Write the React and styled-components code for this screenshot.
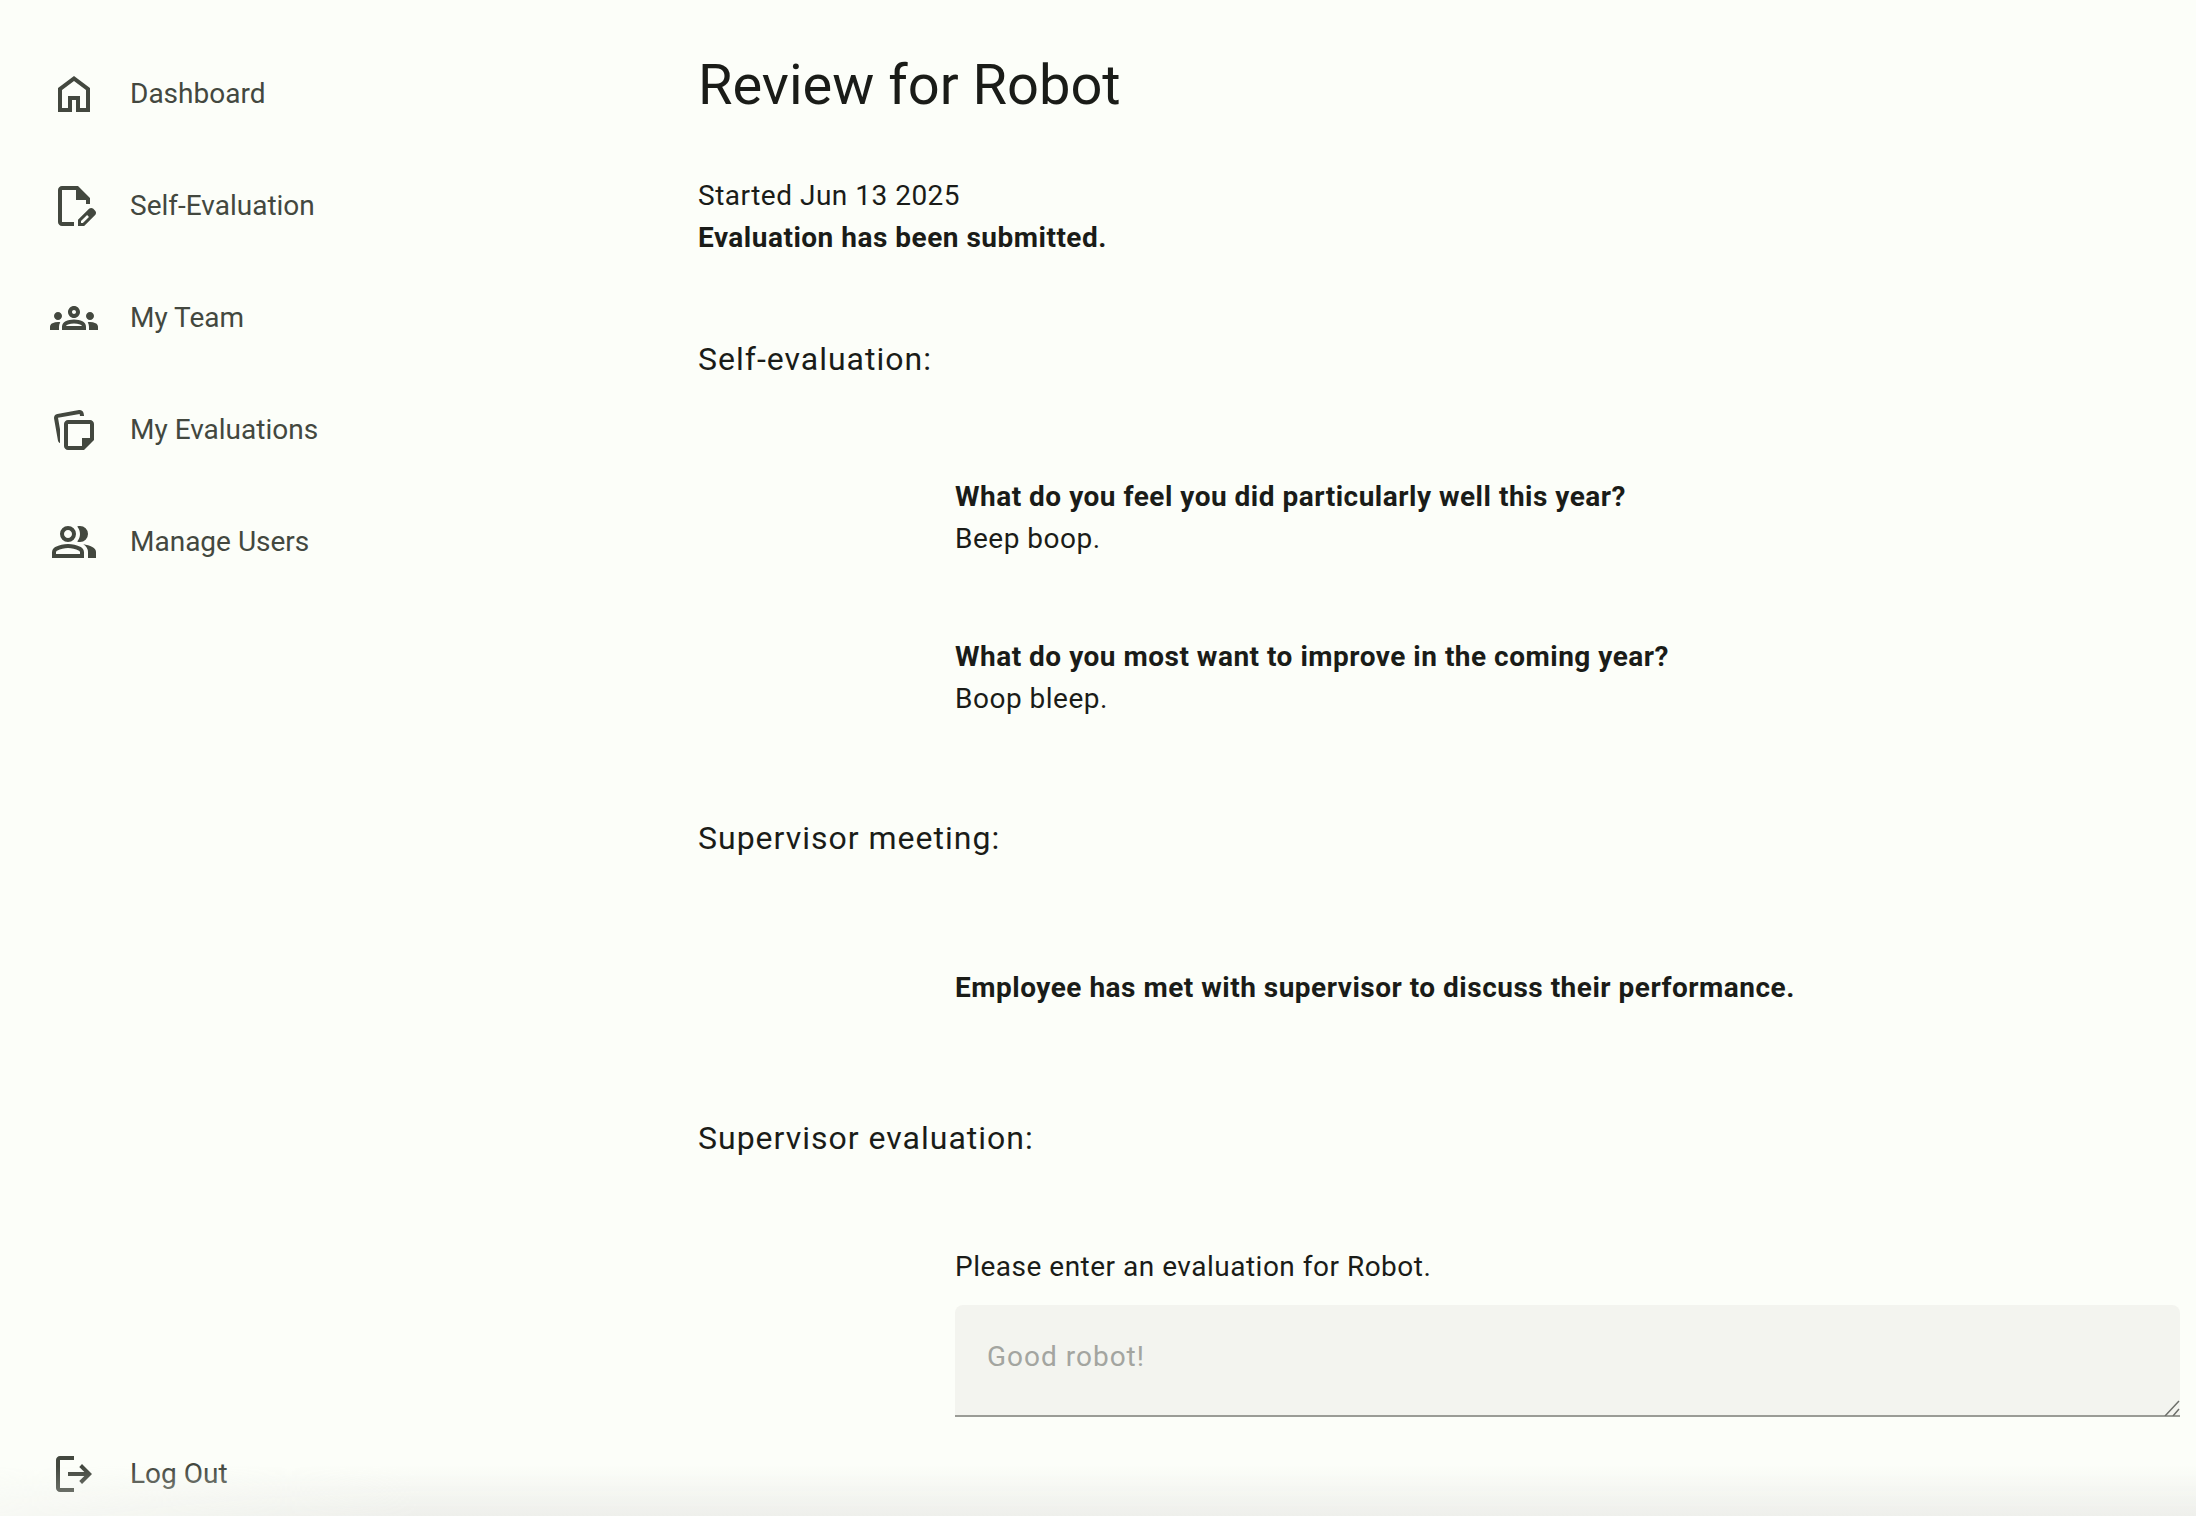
import React from 'react';
import styled, { createGlobalStyle } from 'styled-components';

const GlobalStyle = createGlobalStyle`
	html, body {
		margin: 0;
		height: 100%;
		overflow: hidden;
		background: #fcfef9;
	}
	body {
		font-family: Roboto, "Liberation Sans", sans-serif;
		color: #1a1c18;
	}
`;

const Page = styled.div`
	display: flex;
	height: 100vh;
	overflow: hidden;
`;

const Nav = styled.nav`
	display: flex;
	flex-direction: column;
	justify-content: space-between;
	flex: none;
	box-sizing: border-box;
	width: 698px;
	padding: 38px 0 0 50px;
`;

const NavList = styled.div`
	display: flex;
	flex-direction: column;
`;

const NavItem = styled.a`
	display: flex;
	align-items: center;
	gap: 32px;
	height: ${props => props.$height || 112}px;
	color: #43483f;
	font-size: 28px;
	line-height: 40px;
`;

const NavLabel = styled.span`
	margin-top: -1px;
`;

const Icon = styled.svg`
	flex: none;
	width: 48px;
	height: 48px;
	fill: #43483f;
`;

const Main = styled.main`
	flex: 1;
	min-width: 0;
	padding: 49px 16px 0 0;
`;

const Title = styled.h1`
	margin: 0 0 54px;
	font-size: 56px;
	font-weight: 400;
	line-height: 72px;
`;

const Line = styled.div`
	font-size: 28px;
	line-height: 42px;
	letter-spacing: 0.5px;
	font-weight: ${props => props.$bold ? 700 : 400};
`;

const SectionTitle = styled.h2`
	margin: ${props => props.$top}px 0 0;
	font-size: 32px;
	font-weight: 400;
	line-height: 48px;
	letter-spacing: 1px;
`;

const Indented = styled.div`
	margin: ${props => props.$top}px 0 0 257px;
`;

const Field = styled.div`
	position: relative;
	margin-top: 17px;
`;

const TextArea = styled.textarea`
	display: block;
	box-sizing: border-box;
	width: 100%;
	height: 112px;
	padding: 34px 32px 0;
	border: 0;
	border-bottom: 2px solid #9a9c96;
	border-radius: 8px 8px 0 0;
	outline: 0;
	background: #f3f4ef;
	color: #1a1c18;
	font-family: inherit;
	font-size: 28px;
	line-height: 36px;
	letter-spacing: 1px;
	resize: none;

	&::placeholder {
		color: #a3a5a0;
		opacity: 1;
	}
`;

const Grip = styled.svg`
	position: absolute;
	right: 0;
	bottom: 1px;
	width: 16px;
	height: 16px;
	stroke: #6d6f6a;
	stroke-width: 1.5;
	fill: none;
`;

const BottomFade = styled.div`
	position: fixed;
	left: 0;
	right: 0;
	bottom: 0;
	height: 50px;
	background: linear-gradient(to bottom, rgba(236, 237, 232, 0), #eeefeb);
	mask-image: linear-gradient(to right, rgba(0, 0, 0, 0.35), #000 420px);
	pointer-events: none;
`;

const icons = {
	home: 'M240-200h120v-240h240v240h120v-360L480-740 240-560v360Zm-80 80v-480l320-240 320 240v480H520v-240h-80v240H160Zm320-350Z',
	edit: 'M560-80v-123l221-220q9-9 20-13t22-4q12 0 23 4.5t20 12.5l37 37q8 9 12.5 20t4.5 22q0 11-4 22.5T903-300L683-80H560Zm60-60h38l121-122-18-19-19-18-122 121v38ZM240-80q-33 0-56.5-23.5T160-160v-640q0-33 23.5-56.5T240-880h320l240 240v120h-80v-80H520v-200H240v640h240v80H240Z',
	notes: 'M280-160v-441q0-33 24-56t57-23h439q33 0 56.5 23.5T880-600v320L680-80H360q-33 0-56.5-23.5T280-160ZM81-710q-6-33 13-59.5t52-32.5l434-77q33-6 59.5 13t32.5 52l10 54h-82l-7-40-433 77 40 226v279q-16-9-27.5-24T158-276L81-710Zm279 110v440h280v-160h160v-280H360Zm220 220Z',
	users: 'M40-160v-112q0-34 17.5-62.5T104-378q62-31 126-46.5T360-440q66 0 130 15.5T616-378q29 15 46.5 43.5T680-272v112H40Zm720 0v-120q0-44-24.5-84.5T666-434q51 6 96 20.5t84 35.5q36 20 55 44.5t19 53.5v120H760ZM360-480q-66 0-113-47t-47-113q0-66 47-113t113-47q66 0 113 47t47 113q0 66-47 113t-113 47Zm400-160q0 66-47 113t-113 47q-11 0-28-2.5t-28-5.5q27-32 41.5-71t14.5-81q0-42-14.5-81T544-792q14-5 28-6.5t28-1.5q66 0 113 47t47 113ZM120-240h480v-32q0-11-5.5-20T580-306q-54-27-109-40.5T360-360q-56 0-111 13.5T140-306q-9 5-14.5 14t-5.5 20v32Zm240-320q33 0 56.5-23.5T440-640q0-33-23.5-56.5T360-720q-33 0-56.5 23.5T280-640q0 33 23.5 56.5T360-560Zm0 320Zm0-400Z',
	logout: 'M200-120q-33 0-56.5-23.5T120-200v-560q0-33 23.5-56.5T200-840h280v80H200v560h280v80H200Zm440-160-55-58 102-102H360v-80h327L585-622l55-58 200 200-200 200Z',
};

const teamPath = 'M4,13c1.1,0,2-0.9,2-2c0-1.1-0.9-2-2-2s-2,0.9-2,2C2,12.1,2.9,13,4,13z M5.13,14.1C4.76,14.04,4.39,14,4,14c-0.99,0-1.93,0.21-2.78,0.58C0.48,14.9,0,15.62,0,16.43V18l4.5,0v-1.61C4.5,15.56,4.73,14.78,5.13,14.1z M20,13c1.1,0,2-0.9,2-2c0-1.1-0.9-2-2-2s-2,0.9-2,2C18,12.1,18.9,13,20,13z M24,16.43c0-0.81-0.48-1.53-1.22-1.85C21.93,14.21,20.99,14,20,14c-0.39,0-0.76,0.04-1.13,0.1c0.4,0.68,0.63,1.46,0.63,2.29V18l4.5,0V16.43z M16.24,13.65c-1.17-0.52-2.61-0.9-4.24-0.9c-1.63,0-3.07,0.39-4.24,0.9C6.68,14.13,6,15.21,6,16.39V18h12v-1.61C18,15.21,17.32,14.13,16.24,13.65z M8.07,16c0.09-0.23,0.13-0.39,0.91-0.69c0.97-0.38,1.99-0.56,3.02-0.56s2.05,0.18,3.02,0.56c0.77,0.3,0.81,0.46,0.91,0.69H8.07z M12,8c0.55,0,1,0.45,1,1s-0.45,1-1,1s-1-0.45-1-1S11.45,8,12,8 M12,6c-1.66,0-3,1.34-3,3c0,1.66,1.34,3,3,3s3-1.34,3-3C15,7.34,13.66,6,12,6L12,6z';

const NavIcon = ({ name }) => (
	<Icon viewBox='0 -960 960 960'>
		<path d={ icons[name] }/>
	</Icon>
);

const TeamIcon = () => (
	<Icon viewBox='0 0 24 24'>
		<path d={ teamPath }/>
	</Icon>
);

const App = () => {
	return (
		<Page>
			<GlobalStyle/>
			<Nav>
				<NavList>
					<NavItem><NavIcon name='home'/><NavLabel>Dashboard</NavLabel></NavItem>
					<NavItem><NavIcon name='edit'/><NavLabel>Self-Evaluation</NavLabel></NavItem>
					<NavItem><TeamIcon/><NavLabel>My Team</NavLabel></NavItem>
					<NavItem><NavIcon name='notes'/><NavLabel>My Evaluations</NavLabel></NavItem>
					<NavItem><NavIcon name='users'/><NavLabel>Manage Users</NavLabel></NavItem>
				</NavList>
				<NavItem $height={ 84 }><NavIcon name='logout'/><NavLabel>Log Out</NavLabel></NavItem>
			</Nav>
			<Main>
				<Title>Review for Robot</Title>
				<Line>Started Jun 13 2025</Line>
				<Line $bold>Evaluation has been submitted.</Line>
				<SectionTitle $top={ 76 }>Self-evaluation:</SectionTitle>
				<Indented $top={ 93 }>
					<Line $bold>What do you feel you did particularly well this year?</Line>
					<Line>Beep boop.</Line>
				</Indented>
				<Indented $top={ 76 }>
					<Line $bold>What do you most want to improve in the coming year?</Line>
					<Line>Boop bleep.</Line>
				</Indented>
				<SectionTitle $top={ 94 }>Supervisor meeting:</SectionTitle>
				<Indented $top={ 105 }>
					<Line $bold>Employee has met with supervisor to discuss their performance.</Line>
				</Indented>
				<SectionTitle $top={ 105 }>Supervisor evaluation:</SectionTitle>
				<Indented $top={ 84 }>
					<Line>Please enter an evaluation for Robot.</Line>
					<Field>
						<TextArea placeholder='Good robot!'/>
						<Grip viewBox='0 0 16 16'>
							<path d='M1 16L15 1M9 16L15 9'/>
						</Grip>
					</Field>
				</Indented>
			</Main>
			<BottomFade/>
		</Page>
	);
};

export default App;
